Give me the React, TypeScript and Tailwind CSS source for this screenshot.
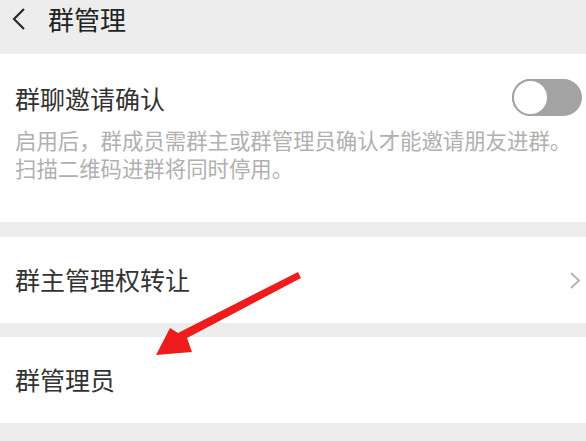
const font = { fontFamily: '"Noto Sans CJK SC", "Noto Sans", sans-serif' };

const Toggle = () => (
  <div className="relative h-[37px] w-[70px] rounded-full bg-[#a3a3a3]">
    <div className="absolute left-0 top-0 h-[37px] w-[37px] rounded-full border-2 border-[#a3a3a3] bg-white" />
  </div>
);

const Chevron = () => (
  <svg width="12" height="19" viewBox="0 0 12 19" fill="none">
    <path d="M2 2l8 7.5L2 17" stroke="#b5b5b5" strokeWidth="2" />
  </svg>
);

const RedArrow = () => (
  <svg className="pointer-events-none absolute left-0 top-0" width="586" height="441" viewBox="0 0 586 441">
    <path d="M298 272 L301 278 L187 338 L192 352 L156 355 L170 328 L178 333 Z" fill="#ee1c1c" />
  </svg>
);

export default function App() {
  return (
    <div className="relative h-[441px] w-[586px] overflow-hidden bg-[#ededed]" style={font}>
      <div className="flex h-[54px] items-start gap-[22px] pl-[12px] pt-[4px]">
        <svg className="mt-[4px]" width="14" height="22" viewBox="0 0 14 22" fill="none">
          <path d="M12 1L2 11l10 10" stroke="#2a2a2a" strokeWidth="2.2" />
        </svg>
        <span className="text-[26px] leading-[30px] text-[#222]">群管理</span>
      </div>

      <div className="h-[168px] bg-white px-[15px] pt-[25px]">
        <div className="flex items-center justify-between">
          <span className="text-[25px] leading-[34px] text-[#333]">群聊邀请确认</span>
          <div className="-mr-[11px]">
            <Toggle />
          </div>
        </div>
        <p className="mt-[10px] whitespace-nowrap text-[21.4px] leading-[28px] text-[#b0b0b0]">
          启用后，群成员需群主或群管理员确认才能邀请朋友进群。
          <br />
          扫描二维码进群将同时停用。
        </p>
      </div>

      <div className="mt-[15px] flex h-[86px] items-center justify-between bg-white pl-[15px] pr-[5px]">
        <span className="text-[25px] text-[#333]">群主管理权转让</span>
        <Chevron />
      </div>

      <div className="mt-[14px] flex h-[86px] items-center bg-white pl-[15px]">
        <span className="text-[25px] text-[#333]">群管理员</span>
      </div>

      <RedArrow />
    </div>
  );
}
